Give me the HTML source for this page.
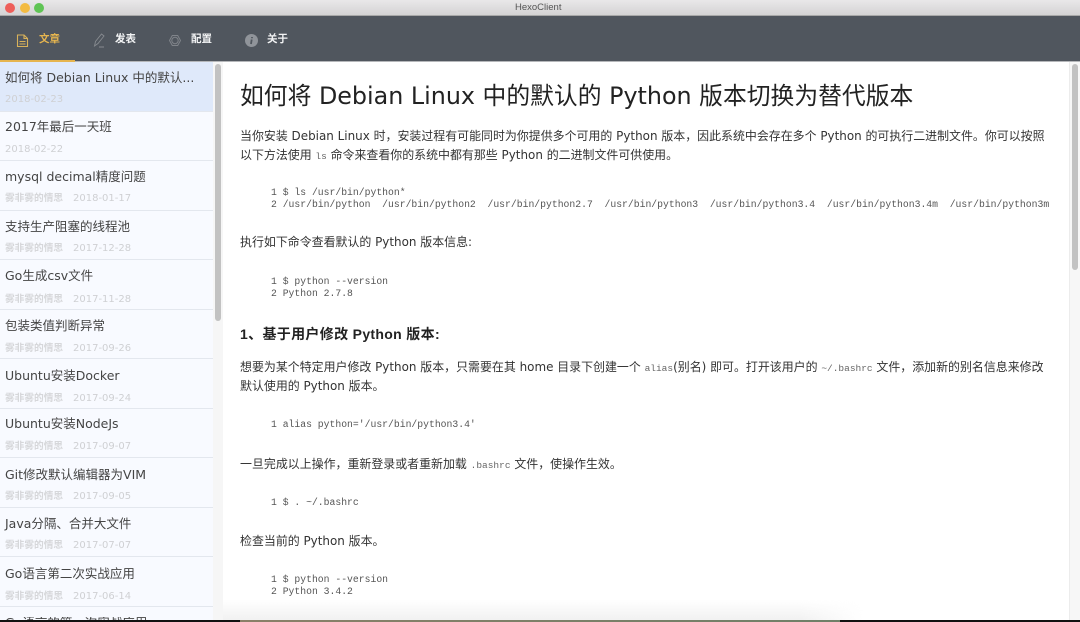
<!DOCTYPE html>
<html><head><meta charset="utf-8"><style>
*{margin:0;padding:0;box-sizing:border-box}
html,body{width:1080px;height:622px;overflow:hidden;background:#fff}
body{position:relative;font-family:"DejaVu Sans","Noto Sans CJK SC",sans-serif;color:#333}
.a{position:absolute;white-space:pre;line-height:1}
.titlebar{position:absolute;left:0;top:0;width:1080px;height:16px;background:linear-gradient(#e9e8e9,#d4d3d4);border-bottom:1px solid #a8a8a8}
.dot{position:absolute;top:3px;width:10px;height:10px;border-radius:50%}
.nav{position:absolute;left:0;top:16px;width:1080px;height:46px;background:#50565e;border-bottom:1px solid #b5b7ba}
.under{position:absolute;left:0;top:60px;width:75px;height:2px;background:#e6b54f}
.navt{font-size:10.5px;font-weight:bold;color:#f2f3f4;top:34px}
.side{position:absolute;left:0;top:62px;width:213px;height:560px;background:#f8faff;overflow:hidden}
.it{position:absolute;left:0;width:213px;border-bottom:1px solid #e3e7ee;height:50px}
.t{position:absolute;left:5px;font-size:12.5px;color:#444;white-space:pre;line-height:1}
.d{position:absolute;font-size:10px;color:#cfd0d3;white-space:pre;line-height:1}
.u{font-size:9.7px;font-weight:bold;color:#d6d7da}
.p{font-size:11.94px;color:#333;left:240px}
.c{font-family:"Liberation Mono",monospace;font-size:9.75px;color:#555;left:271px}
.ic{font-family:"Liberation Mono",monospace;font-size:9.5px;color:#666}
</style></head><body>
<div class="titlebar"></div>
<div class="dot" style="left:5px;background:#ee5f5a"></div>
<div class="dot" style="left:20px;background:#f3bb41"></div>
<div class="dot" style="left:34px;background:#5fc454"></div>
<div class="a" style="left:515px;top:3px;font-size:9.5px;color:#555;font-family:'Liberation Sans',sans-serif">HexoClient</div>

<div class="nav"></div>
<div class="under"></div>
<svg style="position:absolute;left:0;top:16px" width="270" height="46" fill="none">
<path d="M17.500 19v11.500h10v-8l-3.500-3.500zM24 19v3.500h3.500M19.500 25.500h6M19.500 28h6" stroke="#d9b25a" stroke-width="1.100"/>
<path d="M94.500 30l1-4.500 6-7.500 2.500 2-6 7.500zM99 31h5" stroke="#878b90" stroke-width=".9"/>
<path d="M169.500 24.500l2.800-5h5.400l2.800 5-2.800 5h-5.400z" stroke="#80848a" stroke-width="1"/><circle cx="175" cy="24.500" r="3.200" stroke="#80848a"/>
<circle cx="251.500" cy="24.500" r="6.500" fill="#90949a"/><path d="M252 21v1.200M251.700 23.500l-.7 4.500" stroke="#50565e" stroke-width="1.800"/>
</svg>
<div class="a navt" style="left:39px;color:#e6b54f">文章</div>
<div class="a navt" style="left:115px">发表</div>
<div class="a navt" style="left:191px">配置</div>
<div class="a navt" style="left:267px">关于</div>

<div class="side">
<div class="it" style="top:0;background:#dfe9fa"><div class="t" style="top:10px">如何将 Debian Linux 中的默认...</div><div class="d" style="left:5px;top:33px">2018-02-23</div></div>
<div class="it" style="top:49px"><div class="t" style="top:10px">2017年最后一天班</div><div class="d" style="left:5px;top:34px">2018-02-22</div></div>
<div class="it" style="top:99px"><div class="t" style="top:10px">mysql decimal精度问题</div><div class="d u" style="left:5px;top:33px">雾非雾的情思</div><div class="d" style="left:73px;top:33px">2018-01-17</div></div>
<div class="it" style="top:148px"><div class="t" style="top:11px">支持生产阻塞的线程池</div><div class="d u" style="left:5px;top:34px">雾非雾的情思</div><div class="d" style="left:73px;top:34px">2017-12-28</div></div>
<div class="it" style="top:198px"><div class="t" style="top:10px">Go生成csv文件</div><div class="d u" style="left:5px;top:35px">雾非雾的情思</div><div class="d" style="left:73px;top:35px">2017-11-28</div></div>
<div class="it" style="top:247px"><div class="t" style="top:11px">包装类值判断异常</div><div class="d u" style="left:5px;top:35px">雾非雾的情思</div><div class="d" style="left:73px;top:35px">2017-09-26</div></div>
<div class="it" style="top:297px"><div class="t" style="top:11px">Ubuntu安装Docker</div><div class="d u" style="left:5px;top:35px">雾非雾的情思</div><div class="d" style="left:73px;top:35px">2017-09-24</div></div>
<div class="it" style="top:346px"><div class="t" style="top:10px">Ubuntu安装NodeJs</div><div class="d u" style="left:5px;top:34px">雾非雾的情思</div><div class="d" style="left:73px;top:34px">2017-09-07</div></div>
<div class="it" style="top:396px"><div class="t" style="top:11px">Git修改默认编辑器为VIM</div><div class="d u" style="left:5px;top:34px">雾非雾的情思</div><div class="d" style="left:73px;top:34px">2017-09-05</div></div>
<div class="it" style="top:445px"><div class="t" style="top:11px">Java分隔、合并大文件</div><div class="d u" style="left:5px;top:34px">雾非雾的情思</div><div class="d" style="left:73px;top:34px">2017-07-07</div></div>
<div class="it" style="top:495px"><div class="t" style="top:11px">Go语言第二次实战应用</div><div class="d u" style="left:5px;top:35px">雾非雾的情思</div><div class="d" style="left:73px;top:35px">2017-06-14</div></div>
<div class="it" style="top:544px;height:16px;border:0"><div class="t" style="top:11px;height:5px;overflow:hidden">Go语言的第一次实战应用</div></div>
</div>
<div style="position:absolute;left:213px;top:62px;width:10px;height:560px;background:#f6f6f6"></div>
<div style="position:absolute;left:215px;top:64px;width:6px;height:257px;border-radius:3px;background:#c2c2c2"></div>
<div style="position:absolute;left:1069px;top:62px;width:11px;height:560px;background:#f7f7f7;border-left:1px solid #ececec"></div>
<div style="position:absolute;left:1072px;top:64px;width:6px;height:206px;border-radius:3px;background:#c2c2c2"></div>

<div class="a" style="left:240px;top:85px;font-size:23.8px;color:#222">如何将 Debian Linux 中的默认的 Python 版本切换为替代版本</div>
<div class="a p" style="top:131px">当你安装 Debian Linux 时，安装过程有可能同时为你提供多个可用的 Python 版本，因此系统中会存在多个 Python 的可执行二进制文件。你可以按照</div>
<div class="a p" style="top:150px">以下方法使用 <span class="ic">ls</span> 命令来查看你的系统中都有那些 Python 的二进制文件可供使用。</div>
<div class="a c" style="top:188px">1 $ ls /usr/bin/python*</div>
<div class="a c" style="top:200px">2 /usr/bin/python  /usr/bin/python2  /usr/bin/python2.7  /usr/bin/python3  /usr/bin/python3.4  /usr/bin/python3.4m  /usr/bin/python3m</div>
<div class="a p" style="top:237px">执行如下命令查看默认的 Python 版本信息:</div>
<div class="a c" style="top:277px">1 $ python --version</div>
<div class="a c" style="top:289px">2 Python 2.7.8</div>
<div class="a" style="left:240px;top:327px;font-size:14px;font-weight:bold;color:#222;font-family:'Liberation Sans','Noto Sans CJK SC',sans-serif;letter-spacing:.33px">1、基于用户修改 Python 版本:</div>
<div class="a p" style="top:362px">想要为某个特定用户修改 Python 版本，只需要在其 home 目录下创建一个 <span class="ic">alias</span>(别名) 即可。打开该用户的 <span class="ic">~/.bashrc</span> 文件，添加新的别名信息来修改</div>
<div class="a p" style="top:381px">默认使用的 Python 版本。</div>
<div class="a c" style="top:420px">1 alias python='/usr/bin/python3.4'</div>
<div class="a p" style="top:459px">一旦完成以上操作，重新登录或者重新加载 <span class="ic">.bashrc</span> 文件，使操作生效。</div>
<div class="a c" style="top:498px">1 $ . ~/.bashrc</div>
<div class="a p" style="top:536px">检查当前的 Python 版本。</div>
<div class="a c" style="top:575px">1 $ python --version</div>
<div class="a c" style="top:587px">2 Python 3.4.2</div>

<div style="position:absolute;left:223px;top:600px;width:640px;height:20px;background:linear-gradient(rgba(243,243,243,0),#f1f1f1);-webkit-mask-image:linear-gradient(90deg,#000 90%,transparent)"></div>
<div style="position:absolute;left:0;top:620px;width:240px;height:2px;background:#111"></div>
<div style="position:absolute;left:240px;top:620px;width:600px;height:2px;background:linear-gradient(90deg,#8a8068,#6f8068)"></div>
<div style="position:absolute;left:840px;top:620px;width:240px;height:2px;background:#111"></div>
</body></html>
